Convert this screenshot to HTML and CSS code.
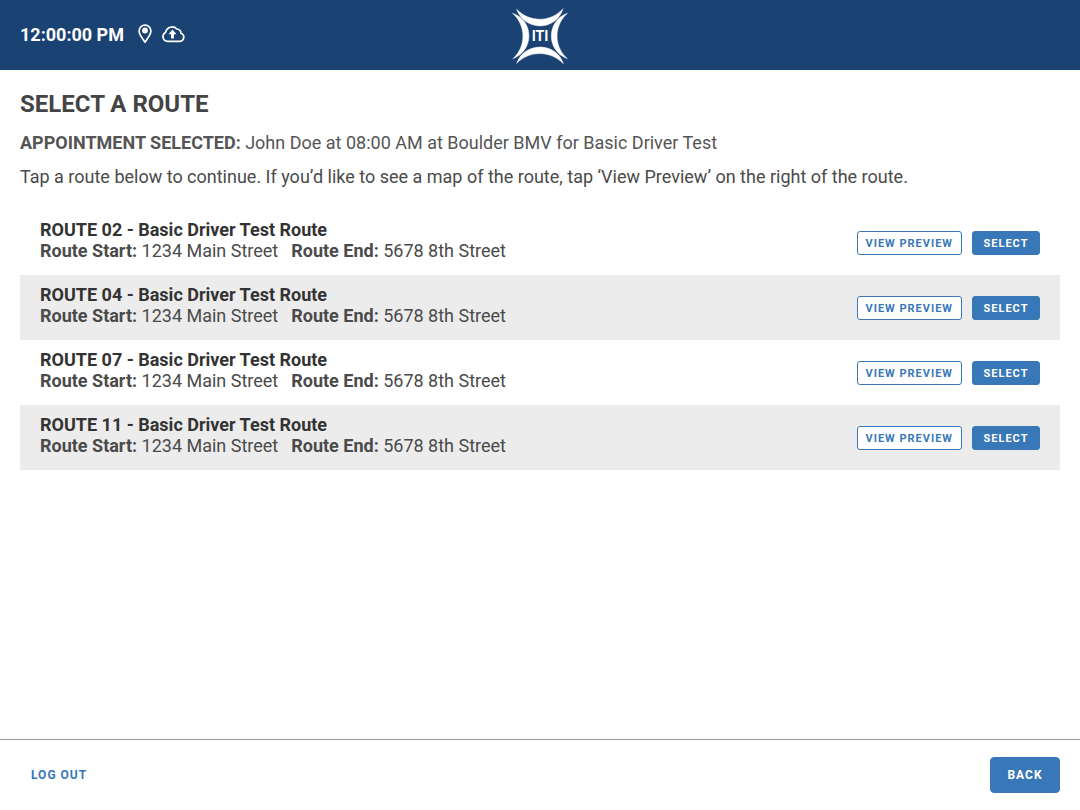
FILE: index.html
```html
<!DOCTYPE html>
<html lang="en">
<head>
<meta charset="utf-8">
<meta name="viewport" content="width=device-width, initial-scale=1">
<title>Select a Route</title>
<link rel="stylesheet" href="styles.css">
</head>
<body>
<header class="topbar">
  <div class="status">
    <time class="clock">12:00:00 PM</time>
    <svg class="icon-pin" viewBox="0 0 14 20" role="img" aria-label="Location"><path d="M7 1.200C3.700 1.200 1.100 3.700 1.100 6.900c0 3.800 3.300 7.200 5.900 11.300 2.600-4.100 5.900-7.500 5.900-11.300C12.900 3.700 10.300 1.200 7 1.200z" fill="none" stroke="currentColor" stroke-width="1.700" stroke-linejoin="round"/><circle cx="7" cy="6.500" r="2.900" fill="currentColor"/></svg>
    <svg class="icon-cloud" viewBox="0 0 23 18" role="img" aria-label="Upload"><path d="M5.600 16.300a4.700 4.700 0 0 1-2-8.900A6.600 6.600 0 0 1 14.900 4a4 4 0 0 1 4 4.300A4.100 4.100 0 0 1 18 16.300z" fill="none" stroke="currentColor" stroke-width="1.700" stroke-linejoin="round"/><path d="M10.500 4.600 14.500 9.200H12v4.400H9V9.200H6.500z" fill="currentColor"/></svg>
  </div>
  <svg class="logo" viewBox="0 0 168 168" role="img" aria-label="ITI">
    <g fill="currentColor" stroke="currentColor" stroke-width="1.500" stroke-linejoin="round">
      <path d="M14 4C52 44 116 44 153 2C132 70 38 71 14 4z"/>
      <path d="M14 166C38 101 132 101 154 167C116 127 52 127 14 166z"/>
      <path d="M2 16C43 53 43 116 3 152C67 128 67 38 2 16z"/>
      <path d="M166 16C103 38 101 128 166 152C125 116 125 53 166 16z"/>
    </g>
    <text class="logo-text" x="84" y="99" text-anchor="middle">ITI</text>
  </svg>
</header>

<main class="content">
  <h1 class="title">SELECT A ROUTE</h1>
  <p class="appointment"><strong>APPOINTMENT SELECTED:</strong> John Doe at 08:00 AM at Boulder BMV for Basic Driver Test</p>
  <p class="hint">Tap a route below to continue. If you’d like to see a map of the route, tap ‘View Preview’ on the right of the route.</p>
  <ul class="routes">
    <li class="route">
      <div class="route-info">
        <h2 class="route-name">ROUTE 02 - Basic Driver Test Route</h2>
        <p class="route-ends"><span><strong>Route Start:</strong> 1234 Main Street</span><span><strong>Route End:</strong> 5678 8th Street</span></p>
      </div>
      <button type="button" class="btn btn-outline">VIEW PREVIEW</button>
      <button type="button" class="btn btn-solid">SELECT</button>
    </li>
    <li class="route">
      <div class="route-info">
        <h2 class="route-name">ROUTE 04 - Basic Driver Test Route</h2>
        <p class="route-ends"><span><strong>Route Start:</strong> 1234 Main Street</span><span><strong>Route End:</strong> 5678 8th Street</span></p>
      </div>
      <button type="button" class="btn btn-outline">VIEW PREVIEW</button>
      <button type="button" class="btn btn-solid">SELECT</button>
    </li>
    <li class="route">
      <div class="route-info">
        <h2 class="route-name">ROUTE 07 - Basic Driver Test Route</h2>
        <p class="route-ends"><span><strong>Route Start:</strong> 1234 Main Street</span><span><strong>Route End:</strong> 5678 8th Street</span></p>
      </div>
      <button type="button" class="btn btn-outline">VIEW PREVIEW</button>
      <button type="button" class="btn btn-solid">SELECT</button>
    </li>
    <li class="route">
      <div class="route-info">
        <h2 class="route-name">ROUTE 11 - Basic Driver Test Route</h2>
        <p class="route-ends"><span><strong>Route Start:</strong> 1234 Main Street</span><span><strong>Route End:</strong> 5678 8th Street</span></p>
      </div>
      <button type="button" class="btn btn-outline">VIEW PREVIEW</button>
      <button type="button" class="btn btn-solid">SELECT</button>
    </li>
  </ul>
</main>

<footer class="footer">
  <button type="button" class="btn btn-large btn-text">LOG OUT</button>
  <button type="button" class="btn btn-large btn-solid">BACK</button>
</footer>
</body>
</html>
```
FILE: styles.css
```css
* {
  box-sizing: border-box;
}

body {
  margin: 0;
  min-height: 100vh;
  display: flex;
  flex-direction: column;
  font-family: Roboto, "Liberation Sans", sans-serif;
  font-size: 18px;
  line-height: 21px;
  color: #4a4a4a;
  background: #fff;
}

h1, h2, p, ul {
  margin: 0;
  padding: 0;
}

.topbar {
  display: grid;
  grid-template-columns: 1fr auto 1fr;
  align-items: center;
  padding: 8px 20px 6px;
  background: #1a4272;
  color: #fff;
}

.status {
  display: flex;
  align-items: center;
  padding-bottom: 4px;
}

.clock {
  font-weight: 700;
  margin-right: 14px;
}

.icon-pin {
  width: 14px;
  height: 20px;
  margin-right: 10px;
}

.icon-cloud {
  width: 23px;
  height: 18px;
}

.logo {
  display: block;
  width: 56px;
  height: 56px;
}

.logo-text {
  font-size: 42px;
  font-weight: 700;
  fill: currentColor;
}

.content {
  flex: 1;
  padding: 20px;
}

.title {
  font-size: 24px;
  line-height: 28px;
  color: #444;
  margin-bottom: 14px;
}

.appointment {
  color: #555;
  margin-bottom: 13px;
}

.hint {
  margin-bottom: 23px;
}

.routes {
  list-style: none;
}

.route {
  display: flex;
  align-items: center;
  gap: 10px;
  padding: 0 20px;
}

.route:nth-child(even) {
  background: #ececec;
}

.route-info {
  flex: 1;
  padding: 9px 0 14px;
}

.route-name {
  font-size: 18px;
  color: #333;
}

.route-ends {
  display: flex;
  flex-wrap: wrap;
  column-gap: 13px;
}

.btn {
  font-family: inherit;
  font-size: 11px;
  font-weight: 700;
  line-height: 14px;
  letter-spacing: 1px;
  padding: 5px 8px 3px;
  border: 1px solid #3878b8;
  border-radius: 3px;
  color: #3878b8;
  background: #fff;
  cursor: pointer;
}

.btn-solid {
  min-width: 68px;
  color: #fff;
  background: #3878b8;
}

.btn-large {
  font-size: 12px;
  padding: 10px 16px;
  border-radius: 4px;
}

.btn-large.btn-solid {
  min-width: 70px;
}

.btn-text {
  padding: 10px;
  border-color: transparent;
  background: transparent;
}

.footer {
  display: flex;
  justify-content: space-between;
  align-items: center;
  padding: 17px 20px;
  border-top: 1px solid #979797;
}
```
